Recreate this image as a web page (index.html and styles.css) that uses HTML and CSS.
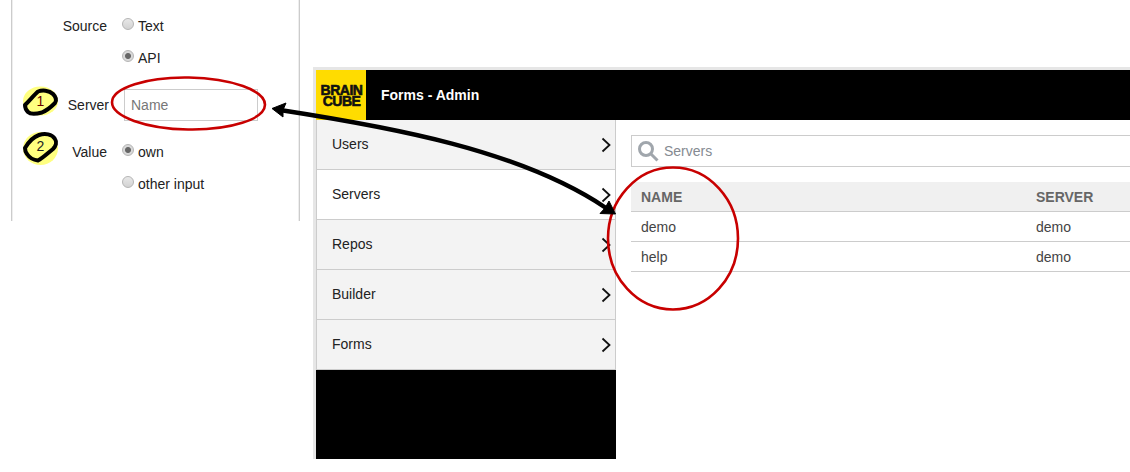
FILE: index.html
```html
<!DOCTYPE html>
<html lang="en">
<head>
<meta charset="utf-8">
<title>Forms - Admin</title>
<link rel="stylesheet" href="styles.css">
</head>
<body>
<section class="form-shot">
  <div class="form-row">
    <span class="form-label">Source</span>
    <label class="choice"><input class="radio" type="radio" name="source"><span>Text</span></label>
  </div>
  <div class="form-row">
    <span class="form-label"></span>
    <label class="choice"><input class="radio" type="radio" name="source" checked><span>API</span></label>
  </div>
  <div class="form-row form-row-gap">
    <span class="form-label form-label-server">Server</span>
    <input class="text-input" type="text" placeholder="Name">
  </div>
  <div class="form-row form-row-gap">
    <span class="form-label">Value</span>
    <label class="choice"><input class="radio" type="radio" name="value" checked><span>own</span></label>
  </div>
  <div class="form-row">
    <span class="form-label"></span>
    <label class="choice"><input class="radio" type="radio" name="value"><span>other input</span></label>
  </div>
</section>

<section class="app-shot">
  <header class="app-header">
    <div class="logo"><span class="logo-line">BRAIN</span><span class="logo-line">CUBE</span></div>
    <h1 class="app-title">Forms - Admin</h1>
  </header>
  <div class="app-body">
    <nav class="sidebar">
      <a class="nav-item">Users<svg class="chevron" viewBox="0 0 10 16"><path d="M1.5 1.500 8.500 8 1.500 14.500"/></svg></a>
      <a class="nav-item nav-item-active">Servers<svg class="chevron" viewBox="0 0 10 16"><path d="M1.5 1.500 8.500 8 1.500 14.500"/></svg></a>
      <a class="nav-item">Repos<svg class="chevron" viewBox="0 0 10 16"><path d="M1.5 1.500 8.500 8 1.500 14.500"/></svg></a>
      <a class="nav-item">Builder<svg class="chevron" viewBox="0 0 10 16"><path d="M1.5 1.500 8.500 8 1.500 14.500"/></svg></a>
      <a class="nav-item">Forms<svg class="chevron" viewBox="0 0 10 16"><path d="M1.5 1.500 8.500 8 1.500 14.500"/></svg></a>
    </nav>
    <main class="content">
      <div class="search">
        <svg class="search-icon" viewBox="0 0 21 21"><circle cx="8" cy="8" r="6.500"/><path d="M12.500 12.500 19.500 19.500"/></svg>
        <span class="search-text">Servers</span>
      </div>
      <div class="table">
        <div class="table-row table-head"><span class="col-name">NAME</span><span>SERVER</span></div>
        <div class="table-row"><span class="col-name">demo</span><span>demo</span></div>
        <div class="table-row"><span class="col-name">help</span><span>demo</span></div>
      </div>
    </main>
  </div>
</section>

<svg class="annotations" viewBox="0 0 1130 472">
  <ellipse class="ring" cx="188.500" cy="103.500" rx="76.500" ry="26" transform="rotate(1 188.500 103.500)"/>
  <ellipse class="ring" cx="673" cy="238.500" rx="65" ry="71"/>
  <path class="arrow-line" d="M280 110 C390 127 520 150 606 208"/>
  <path class="arrow-head" d="M272 108.500 286 103 283 110 283 117Z"/>
  <path class="arrow-head" d="M615.500 214 600 213.500 605 208 609 201Z"/>

  <ellipse class="badge-bg" cx="40.500" cy="101" rx="17.500" ry="14.500"/>
  <path class="badge-line" d="M25 105 C30 100 34 95 38 91.500 C42 90 49 90 53 94 C56 97 57 100 55 103 C52 106 48 110 42 112.500 C36 114 30 114 28 112 C26 110 25 107 25 105Z"/>
  <text class="badge-num badge-num-1" x="40.500" y="106">1</text>

  <ellipse class="badge-bg" cx="40.500" cy="148.500" rx="17.500" ry="16.500"/>
  <path class="badge-line" d="M25 148 C28 143 33 137 39 135 C45 133 52 134 55 139 C57 142 56 146 53 149 C48 153 43 158 38 160.500 C33 160 29 157 27 154 C25.500 152 25 150 25 148Z"/>
  <text class="badge-num" x="40.500" y="151">2</text>
</svg>
</body>
</html>
```

FILE: styles.css
```css
* { box-sizing: border-box; }

html, body {
  margin: 0;
  padding: 0;
  height: 472px;
  overflow: hidden;
  background: #fff;
}

body {
  position: relative;
  font: 14px "Liberation Sans", Arial, sans-serif;
  color: #222;
}

/* Left screenshot fragment */
.form-shot {
  position: absolute;
  left: 11px;
  top: 0;
  width: 289px;
  height: 221px;
  padding-top: 10px;
  border-left: 1px solid #ccc;
  border-right: 1px solid #ccc;
  box-shadow: inset 1px 0 #eee, inset -1px 0 #eee;
}

.form-row {
  display: flex;
  align-items: center;
  height: 32px;
}

.form-row-gap { margin-top: 15px; }

.form-label {
  width: 95px;
  margin-right: 15px;
  text-align: right;
  color: #222;
}

.form-label-server {
  width: 97px;
  margin-right: 15px;
}

.choice {
  display: flex;
  align-items: center;
  gap: 4px;
}

.radio {
  appearance: none;
  width: 12px;
  height: 12px;
  margin: -4px 0 0;
  border: 1px solid #b5b5b5;
  border-radius: 50%;
  background: linear-gradient(#e8e8e8, #d2d2d2);
}

.radio:checked {
  background: radial-gradient(circle, #666 0 2.5px, #d8d8d8 3.5px);
}

.text-input {
  width: 134px;
  height: 32px;
  padding: 0 6px;
  border: 1px solid #ccc;
  background: #fff;
  font: inherit;
  outline: none;
}

.text-input::placeholder { color: #777; opacity: 1; }

/* Right screenshot fragment */
.app-shot {
  position: absolute;
  left: 313px;
  top: 67px;
  width: 817px;
  height: 392px;
  overflow: hidden;
  display: flex;
  flex-direction: column;
  padding: 3px 0 0 3px;
  background: #e6e6e6;
}

.app-header {
  display: flex;
  align-items: center;
  flex: 0 0 50px;
  background: #000;
}

.logo {
  width: 50px;
  height: 50px;
  padding: 15px 0 0 1px;
  background: #ffdc00;
  color: #111;
  font-weight: bold;
  font-size: 14px;
  letter-spacing: -.5px;
  text-align: center;
  -webkit-text-stroke: .6px #111;
}

.logo-line {
  display: block;
  height: 10.500px;
  line-height: 10.500px;
}

.app-title {
  margin: 0 0 0 15px;
  color: #fff;
  font-size: 14px;
  font-weight: bold;
}

.app-body {
  display: flex;
  flex: 1;
  min-height: 0;
}

.sidebar {
  flex: 0 0 300px;
  background: #000;
}

.nav-item {
  display: flex;
  align-items: center;
  justify-content: space-between;
  height: 50px;
  padding: 0 4px 1px 15px;
  border: 1px solid #ccc;
  border-width: 0 1px 1px 1px;
  background: #f3f3f3;
  color: #222;
}

.nav-item-active { background: #fff; }

.chevron {
  width: 10px;
  height: 16px;
  margin-top: 2px;
  fill: none;
  stroke: #111;
  stroke-width: 1.8;
}

.content {
  flex: 0 0 600px;
  padding: 15px 0 0 15px;
  background: #fff;
}

.search {
  display: flex;
  align-items: center;
  gap: 5px;
  height: 32px;
  padding-left: 6px;
  border: 1px solid #ccc;
}

.search-icon {
  width: 21px;
  height: 21px;
  fill: none;
  stroke: #a0a6ac;
  stroke-width: 3;
}

.search-text { color: #858a91; }

.table { margin-top: 15px; }

.table-row {
  display: flex;
  align-items: center;
  height: 30px;
  padding-left: 10px;
  border-bottom: 1px solid #ccc;
  color: #444;
}

.table-head {
  background: #f0f0f0;
  color: #666;
  font-weight: bold;
}

.col-name { width: 395px; }

/* Hand-drawn annotations */
.annotations {
  position: absolute;
  left: 0;
  top: 0;
  width: 1130px;
  height: 472px;
  pointer-events: none;
}

.ring {
  fill: none;
  stroke: #c80000;
  stroke-width: 2.600;
}

.arrow-line {
  fill: none;
  stroke: #000;
  stroke-width: 4.500;
}

.arrow-head { fill: #000; stroke: #000; stroke-width: 1; stroke-linejoin: round; }

.badge-bg { fill: #ffff80; }

.badge-line {
  fill: none;
  stroke: #000;
  stroke-width: 4;
  stroke-linejoin: round;
}

.badge-num {
  font: 14px "Liberation Sans", Arial, sans-serif;
  fill: #222;
  text-anchor: middle;
}

.badge-num-1 { fill: #600; }
```
